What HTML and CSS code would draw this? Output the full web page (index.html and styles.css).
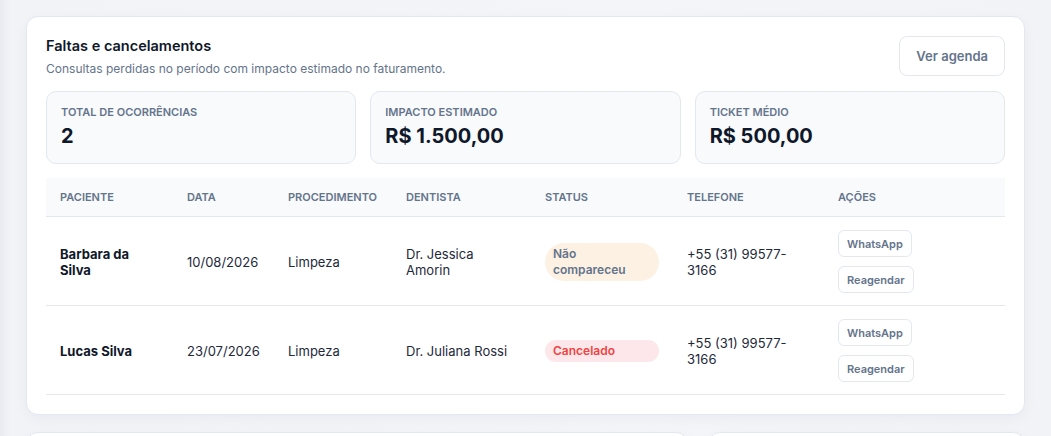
FILE: index.html
```html
<!DOCTYPE html>
<html>
  <head>
    <meta charset="UTF-8">
    <title>Faltas e cancelamentos</title>
    <link rel="stylesheet" href="styles.css">
  </head>
  <body>
    <main class="page">
      <section class="card">
        <div class="card-head">
          <div>
            <h1>Faltas e cancelamentos</h1>
            <p class="subtitle">Consultas perdidas no período com impacto estimado no faturamento.</p>
          </div>
          <button type="button" class="btn">Ver agenda</button>
        </div>

        <div class="stats">
          <div class="stat">
            <div class="stat-label">Total de ocorrências</div>
            <div class="stat-value">2</div>
          </div>
          <div class="stat">
            <div class="stat-label">Impacto estimado</div>
            <div class="stat-value">R$ 1.500,00</div>
          </div>
          <div class="stat">
            <div class="stat-label">Ticket médio</div>
            <div class="stat-value">R$ 500,00</div>
          </div>
        </div>

        <table class="table">
          <colgroup>
            <col class="c-name">
            <col class="c-date">
            <col class="c-proc">
            <col class="c-dent">
            <col class="c-status">
            <col class="c-phone">
            <col>
          </colgroup>
          <thead>
            <tr>
              <th>Paciente</th>
              <th>Data</th>
              <th>Procedimento</th>
              <th>Dentista</th>
              <th>Status</th>
              <th>Telefone</th>
              <th>Ações</th>
            </tr>
          </thead>
          <tbody>
            <tr>
              <td class="name">Barbara da Silva</td>
              <td>10/08/2026</td>
              <td>Limpeza</td>
              <td>Dr. Jessica Amorin</td>
              <td><span class="badge badge-warn">Não compareceu</span></td>
              <td>+55 (31) 99577-3166</td>
              <td>
                <div class="actions">
                  <button type="button" class="btn btn-sm">WhatsApp</button>
                  <button type="button" class="btn btn-sm">Reagendar</button>
                </div>
              </td>
            </tr>
            <tr>
              <td class="name">Lucas Silva</td>
              <td>23/07/2026</td>
              <td>Limpeza</td>
              <td>Dr. Juliana Rossi</td>
              <td><span class="badge badge-danger">Cancelado</span></td>
              <td>+55 (31) 99577-3166</td>
              <td>
                <div class="actions">
                  <button type="button" class="btn btn-sm">WhatsApp</button>
                  <button type="button" class="btn btn-sm">Reagendar</button>
                </div>
              </td>
            </tr>
          </tbody>
        </table>
      </section>

      <div class="lower">
        <section class="card card-stub"></section>
        <section class="card card-stub"></section>
      </div>
    </main>
  </body>
</html>
```

FILE: styles.css
```css
* {
  box-sizing: border-box;
}
html, body {
  height: 100%;
}
body {
  margin: 0;
  font-family: Inter, "Noto Sans", sans-serif;
  color: #0f172a;
  background: linear-gradient(90deg, #e9ebf0 0px, #f1f3f7 10px, #f3f5f9 60%, #f1f3f7 100%);
  overflow: hidden;
}
.page {
  padding: 16px 26px 0 26px;
}
.card {
  background-color: #FFFFFF;
  border: 1px solid #e2e8f0;
  border-radius: 12px;
  padding: 19px 19px 19px 19px;
  box-shadow: 0px 4px 14px 0px rgba(15, 23, 42, 0.04);
}
.card-head {
  display: flex;
  justify-content: space-between;
  align-items: flex-start;
}
h1 {
  font-size: 14.5px;
  font-weight: 600;
  margin: 1px 0 0 0;
  line-height: 18px;
  color: #0f172a;
}
.subtitle {
  margin: 6px 0 0 0;
  font-size: 12px;
  line-height: 16px;
  color: #64748b;
}
.btn {
  font-family: inherit;
  border: 1px solid #e2e8f0;
  background-color: #FFFFFF;
  border-radius: 8px;
  color: #64748b;
  font-weight: 600;
  cursor: pointer;
}
.card-head .btn {
  height: 40px;
  padding: 0 16px;
  font-size: 13px;
}
.stats {
  display: grid;
  grid-template-columns: 1fr 1fr 1fr;
  gap: 14px;
  margin-top: 14px;
}
.stat {
  background-color: #f8fafc;
  border: 1px solid #e2e8f0;
  border-radius: 10px;
  height: 73px;
  padding: 13px 14px 0 14px;
}
.stat-label {
  font-size: 11px;
  font-weight: 600;
  line-height: 14px;
  text-transform: uppercase;
  color: #64748b;
}
.stat-value {
  font-size: 20px;
  font-weight: 700;
  line-height: 24px;
  margin-top: 5px;
  color: #0f172a;
}
.table {
  width: 100%;
  margin-top: 14px;
  border-collapse: collapse;
  table-layout: fixed;
}
.c-name { width: 127px; }
.c-date { width: 101px; }
.c-proc { width: 118px; }
.c-dent { width: 139px; }
.c-status { width: 142px; }
.c-phone { width: 151px; }
.table th {
  background-color: #f8fafc;
  text-align: left;
  font-size: 11px;
  font-weight: 600;
  line-height: 14px;
  text-transform: uppercase;
  color: #64748b;
  padding: 12px 14px;
  border-bottom: 1px solid #e2e8f0;
}
.table td {
  font-size: 13px;
  line-height: 16px;
  padding: 13px 14px 12px 14px;
  border-bottom: 1px solid #e2e8f0;
  color: #1e293b;
  vertical-align: middle;
}
.table td.name {
  font-weight: 700;
  color: #0f172a;
}
.badge {
  display: block;
  border-radius: 999px;
  padding: 3px 8px;
  font-size: 12px;
  font-weight: 600;
  line-height: 16px;
}
.badge-warn {
  background-color: #fdf1e4;
  color: #64748b;
}
.badge-danger {
  background-color: #fde7ea;
  color: #ef4444;
}
.actions {
  display: flex;
  flex-direction: column;
  align-items: flex-start;
  gap: 9px;
}
.btn-sm {
  height: 27px;
  padding: 0 8px;
  font-size: 11px;
  border-radius: 6px;
}
.lower {
  display: grid;
  grid-template-columns: 662px 1fr;
  gap: 20px;
  margin-top: 17px;
}
.card-stub {
  height: 60px;
}
```
